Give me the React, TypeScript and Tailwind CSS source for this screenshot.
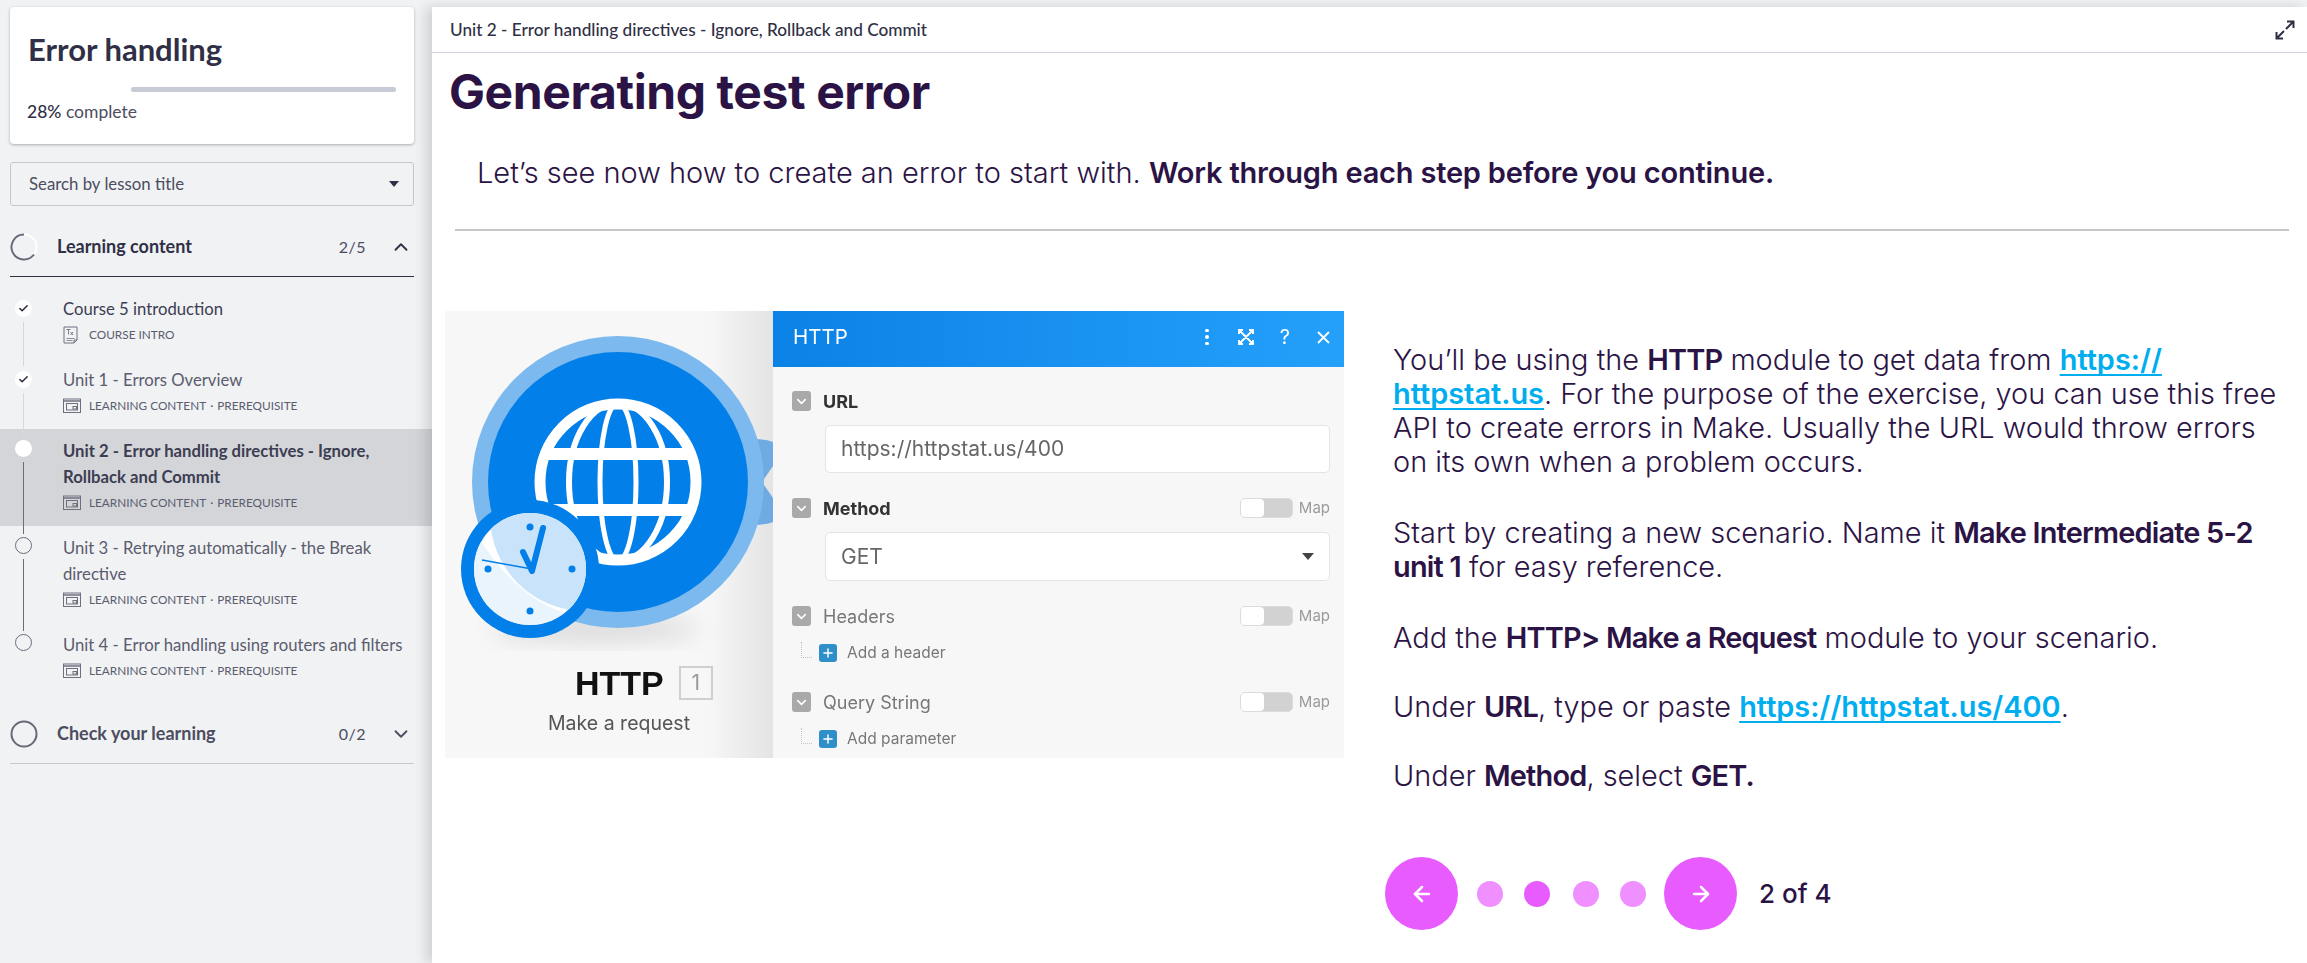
import React from "react";
import { ArrowLeft, ArrowRight, ChevronDown, ChevronUp, Plus, Check } from "lucide-react";

const lessons = [
  { title: ["Course 5 introduction"], sub: "COURSE INTRO", state: "done", intro: true, lineTop: "", lineBottom: "bg-[#d6d8dc]" },
  { title: ["Unit 1 - Errors Overview"], state: "done", lineTop: "bg-[#d6d8dc]", lineBottom: "bg-[#d6d8dc]" },
  { title: ["Unit 2 - Error handling directives - Ignore,", "Rollback and Commit"], state: "current", lineTop: "bg-[#d6d8dc]", lineBottom: "bg-[#6b6c7c]" },
  { title: ["Unit 3 - Retrying automatically - the Break", "directive"], state: "todo", lineTop: "bg-[#6b6c7c]", lineBottom: "bg-[#6b6c7c]" },
  { title: ["Unit 4 - Error handling using routers and filters"], state: "todo", lineTop: "bg-[#6b6c7c]", lineBottom: "" },
];

function SlideIcon() {
  return (
    <svg width="18" height="16" viewBox="0 0 18 16" fill="none" stroke="#6e7080" strokeWidth="1">
      <rect x="0.5" y="1" width="17" height="13.5" />
      <path d="M1 3h16" strokeWidth="1.5" />
      <rect x="3.5" y="5.5" width="11" height="6.5" />
      <rect x="10" y="8.5" width="3.5" height="2.5" />
    </svg>
  );
}

function DocIcon() {
  return (
    <svg width="16" height="18" viewBox="0 0 16 18" fill="none" stroke="#6e7080" strokeWidth="1">
      <path d="M1 1h13v13l-3 3H1z" />
      <path d="M11 17v-3h3" />
      <path d="M3.5 12.500h8M3.500 14.500h6" strokeWidth="0.8" />
      <path d="M3.500 3.500h4M5.500 3.500v5M7.500 6l2.500 3M10 6l-2.500 3" strokeWidth="0.9" />
    </svg>
  );
}

function LessonRow({ lesson, index }: { lesson: any; index: number }) {
  const current = lesson.state === "current";
  const firstTwo = index < 2;
  return (
    <div className={`flex items-stretch pl-[14px] ${current ? "bg-[#d4d5d9]" : ""}`}>
      <div className="flex w-[18px] flex-col items-center">
        <div className={`h-[8px] w-[1px] ${lesson.lineTop}`} />
        <div className={`${firstTwo ? "mt-[5px]" : "mt-[3px]"} flex h-[17px] w-[17px] shrink-0 items-center justify-center rounded-full ${lesson.state === "todo" ? "border border-[#6b6c7c]" : "bg-white"}`}>
          {lesson.state === "done" && <Check size={11} strokeWidth={3} color="#22223a" />}
        </div>
        <div className={`mt-[5px] w-[1px] flex-1 ${lesson.lineBottom}`} />
      </div>
      <div className="ml-[31px] pt-[9px] pb-[10px]">
        <div className={`text-[16.700px] leading-[26px] ${current ? "font-bold text-[#3c3d52]" : index === 0 ? "text-[#3c3d52]" : "text-[#5b5c6e]"}`}>
          {lesson.title.map((t: string) => (
            <div key={t} className="whitespace-nowrap">{t}</div>
          ))}
        </div>
        <div className="flex h-[26px] items-center text-[11.800px] text-[#5b5c6e]">
          {lesson.intro ? <DocIcon /> : <SlideIcon />}
          {lesson.intro ? (
            <span className="ml-[10px] whitespace-nowrap">COURSE INTRO</span>
          ) : (
            <span className="ml-[8px] whitespace-nowrap">
              LEARNING CONTENT<span className="mx-[4px]">·</span>PREREQUISITE
            </span>
          )}
        </div>
      </div>
    </div>
  );
}

function Sidebar() {
  return (
    <aside className="w-[432px] shrink-0 bg-[#f1f2f4] pt-[7px] font-['Lato',sans-serif] text-[#2f3045]">
      <div className="mx-[10px] h-[137px] w-[404px] rounded-[4px] bg-white px-[18px] pt-[24px] shadow-[0_1px_3px_rgba(0,0,0,0.3)]">
        <h2 className="text-[31px] leading-[36px] font-bold">Error handling</h2>
        <div className="mt-[20px] ml-[103px] h-[5px] rounded-[2px] bg-[#c8cad6]" />
        <div className="mt-[7px] -ml-[1px] text-[17.500px] leading-[26px]">
          <span className="font-medium">28%</span> <span className="text-[#4c4d60]">complete</span>
        </div>
      </div>
      <div className="mx-[10px] mt-[18px] flex h-[44px] w-[404px] items-center justify-between rounded-[3px] border border-[#c5c7d0] pr-[14px] pl-[18px] text-[16.800px]">
        <span className="text-[#4c4d60]">Search by lesson title</span>
        <span className="h-0 w-0 border-x-[5px] border-t-[6px] border-x-transparent border-t-[#2f3045]" />
      </div>

      <div className="mx-[10px] mt-[21px] flex h-[50px] w-[404px] items-center border-b border-[#2f3045] pb-[10px]">
        <svg width="28" height="28" viewBox="0 0 28 28" fill="none">
          <circle cx="14" cy="14" r="12.500" stroke="#ffffff" strokeWidth="2" />
          <path d="M14 1.500A12.500 12.500 0 1 0 24 21.500" stroke="#666878" strokeWidth="2" />
        </svg>
        <span className="ml-[19px] flex-1 text-[18px] font-bold">Learning content</span>
        <span className="text-[16px] tracking-[0.5px] text-[#4c4d60]">2/5</span>
        <ChevronUp size={22} strokeWidth={2} className="mr-[2px] ml-[24px]" />
      </div>

      <div className="mt-[10px] w-full">
        {lessons.map((lesson, i) => (
          <LessonRow key={i} lesson={lesson} index={i} />
        ))}
      </div>

      <div className="mx-[10px] mt-[20px] flex h-[50px] w-[404px] items-center border-b border-[#c5c7d0] pb-[10px]">
        <svg width="28" height="28" viewBox="0 0 28 28" fill="none">
          <circle cx="14" cy="14" r="12.500" stroke="#666878" strokeWidth="2" />
        </svg>
        <span className="ml-[19px] flex-1 text-[18px] font-bold text-[#4c4d60]">Check your learning</span>
        <span className="text-[16px] tracking-[0.5px] text-[#4c4d60]">0/2</span>
        <ChevronDown size={22} strokeWidth={2} className="mr-[2px] ml-[24px] text-[#4c4d60]" />
      </div>
    </aside>
  );
}

function HttpBubble() {
  return (
    <svg width="328" height="340" viewBox="0 0 328 340" fill="none" className="shrink-0">
      <defs>
        <clipPath id="face"><circle cx="85" cy="258" r="56" /></clipPath>
        <filter id="soft" x="-30%" y="-100%" width="160%" height="300%"><feGaussianBlur stdDeviation="12" /></filter>
      </defs>
      <ellipse cx="150" cy="318" rx="105" ry="12" fill="#000" opacity="0.12" filter="url(#soft)" />
      <path d="M305 129q14-2 23 2v24l-11 16 11 16v24q-9 4-23 2z" fill="#6fabe2" />
      <circle cx="173" cy="171" r="146" fill="#7cb9ee" />
      <circle cx="173" cy="171" r="130" fill="#027fe8" />
      <g stroke="#fff" fill="none">
        <circle cx="173" cy="171" r="78" strokeWidth="11" />
        <ellipse cx="173" cy="171" rx="49" ry="79" strokeWidth="6" />
        <ellipse cx="173" cy="171" rx="18" ry="79" strokeWidth="5" />
        <path d="M98 143h150M98 199h150" strokeWidth="12" />
      </g>
      <circle cx="85" cy="258" r="69" fill="#027fe8" />
      <circle cx="85" cy="258" r="56" fill="#fff" />
      <g clipPath="url(#face)">
        <circle cx="140" cy="205" r="95" fill="#c9e3fb" />
        <path d="M30 220 Q70 290 130 305 L60 330 L20 260Z" fill="#e3f1fd" opacity="0.8" />
      </g>
      <circle cx="85" cy="216" r="3.500" fill="#027fe8" />
      <circle cx="43" cy="258" r="3.500" fill="#027fe8" />
      <circle cx="127" cy="258" r="3.500" fill="#027fe8" />
      <circle cx="85" cy="300" r="3.500" fill="#027fe8" />
      <path d="M37 249l50 9" stroke="#027fe8" strokeWidth="1.500" />
      <path d="M78 241l9 19 11-43" stroke="#027fe8" strokeWidth="6" strokeLinecap="round" strokeLinejoin="round" />
    </svg>
  );
}

function Toggle() {
  return (
    <div className="ml-auto flex items-center text-[15px] text-[#9a9a9a]">
      <div className="flex h-[20px] w-[53px] rounded-[5px] border border-[#dcdcdc] bg-[#d2d2d2]">
        <div className="h-full w-[23px] rounded-[4px] bg-white" />
      </div>
      <span className="ml-[6px]">Map</span>
    </div>
  );
}

function FieldHead({ label, bold, map }: { label: string; bold?: boolean; map?: boolean }) {
  return (
    <div className="flex h-[20px] items-center">
      <div className="flex h-[20px] w-[19px] shrink-0 items-center justify-center rounded-[3px] bg-[#a9a9a9]">
        <ChevronDown size={15} strokeWidth={2.500} color="#fff" />
      </div>
      <span className={`ml-[12px] text-[18px] ${bold ? "font-bold text-[#333]" : "text-[#777]"}`}>{label}</span>
      {map && <Toggle />}
    </div>
  );
}

function AddRow({ label }: { label: string }) {
  return (
    <div className="mt-[17px] flex h-[20px] items-center pl-[9px]">
      <div className="mb-[6px] h-[16px] w-[11px] border-b border-l border-dotted border-[#c4c4c4]" />
      <div className="ml-[7px] flex h-[18px] w-[18px] items-center justify-center rounded-[3px] bg-[#2f8fc9]">
        <Plus size={14} strokeWidth={2.500} color="#fff" />
      </div>
      <span className="ml-[10px] text-[15.500px] text-[#777]">{label}</span>
    </div>
  );
}

function Illustration() {
  return (
    <div className="flex h-[447px] w-[899px] shrink-0 bg-[#f7f7f7] font-['Inter',sans-serif] blur-[0.3px]">
      <div className="w-[328px] shrink-0 bg-gradient-to-r from-[#f7f7f7] from-[80%] to-[#e4e4e4]">
        <HttpBubble />
        <div className="mt-[14px] flex h-[36px] items-center pl-[130px]">
          <span className="font-['Liberation_Sans',sans-serif] text-[34px] leading-none font-bold text-[#111]">HTTP</span>
          <span className="ml-[15px] flex h-[34px] w-[34px] items-center justify-center border-2 border-[#cfcfcf] text-[21px] text-[#999]">1</span>
        </div>
        <div className="mt-[9px] pl-[103px] text-[19.500px] leading-[26px] text-[#555]">Make a request</div>
      </div>
      <div className="min-w-0 flex-1">
        <div className="flex h-[56px] items-center bg-gradient-to-r from-[#0a82e6] to-[#24a0fb] pr-[14px] pb-[4px] pl-[20px] text-white">
          <span className="text-[20.500px]">HTTP</span>
          <span className="ml-auto flex flex-col gap-[3px]">
            <i className="h-[3.500px] w-[3.500px] rounded-full bg-white" />
            <i className="h-[3.500px] w-[3.500px] rounded-full bg-white" />
            <i className="h-[3.500px] w-[3.500px] rounded-full bg-white" />
          </span>
          <svg className="ml-[29px]" width="16" height="16" viewBox="0 0 16 16" fill="none" stroke="#fff" strokeWidth="1.800">
            <path d="M1 5V1h4M11 1h4v4M15 11v4h-4M5 15H1v-4M2 2l12 12M14 2L2 14" />
          </svg>
          <span className="ml-[26px] text-[20px] leading-none">?</span>
          <svg className="ml-[27px]" width="13" height="13" viewBox="0 0 13 13" fill="none" stroke="#fff" strokeWidth="1.800">
            <path d="M1 1l11 11M12 1L1 12" />
          </svg>
        </div>
        <div className="pt-[23px] pr-[14px] pl-[19px]">
          <div className="mt-[1px]"><FieldHead label="URL" bold /></div>
          <div className="mt-[14px] ml-[33px] flex h-[48px] items-center rounded-[5px] border border-[#e4e4e4] bg-white px-[15px] text-[21px] text-[#666]">
            https://httpstat.us/400
          </div>
          <div className="mt-[25px]"><FieldHead label="Method" bold map /></div>
          <div className="mt-[14px] ml-[33px] flex h-[49px] items-center justify-between rounded-[5px] border border-[#e4e4e4] bg-white px-[15px] text-[21px] text-[#666]">
            GET
            <span className="h-0 w-0 border-x-[6px] border-t-[7px] border-x-transparent border-t-[#444]" />
          </div>
          <div className="mt-[25px]"><FieldHead label="Headers" map /></div>
          <AddRow label="Add a header" />
          <div className="mt-[29px]"><FieldHead label="Query String" map /></div>
          <AddRow label="Add parameter" />
        </div>
      </div>
    </div>
  );
}

function Pager() {
  return (
    <div className="mt-[64px] flex items-center">
      <button className="flex h-[73px] w-[73px] items-center justify-center rounded-full bg-[#e85bff] text-white">
        <ArrowLeft size={24} strokeWidth={2.500} />
      </button>
      <div className="ml-[19px] h-[26px] w-[26px] rounded-full bg-[#f08fff]" />
      <div className="ml-[21px] h-[26px] w-[26px] rounded-full bg-[#e85bff]" />
      <div className="ml-[23px] h-[26px] w-[26px] rounded-full bg-[#f08fff]" />
      <div className="ml-[21px] h-[26px] w-[26px] rounded-full bg-[#f08fff]" />
      <button className="ml-[18px] flex h-[73px] w-[73px] items-center justify-center rounded-full bg-[#e85bff] text-white">
        <ArrowRight size={24} strokeWidth={2.500} />
      </button>
      <span className="ml-[22px] text-[26px] font-medium">2 of 4</span>
    </div>
  );
}

function Link({ children }: { children: React.ReactNode }) {
  return <a className="font-semibold text-[#00aeef] underline decoration-2 underline-offset-[4px] [text-decoration-skip-ink:none]">{children}</a>;
}

function Strong({ children }: { children: React.ReactNode }) {
  return <b className="font-semibold tracking-[-0.8px]">{children}</b>;
}

function Main() {
  return (
    <main className="mt-[7px] min-w-0 flex-1 bg-white font-['Inter',sans-serif] text-[#2b1445] shadow-[-6px_0_12px_rgba(0,0,0,0.14)]">
      <header className="flex h-[46px] items-center justify-between border-b border-[#d0d2dc] pr-[12px] pl-[18px] font-['Lato',sans-serif] text-[17.200px] font-medium text-[#2f3045]">
        <span>Unit 2 - Error handling directives - Ignore, Rollback and Commit</span>
        <svg width="20" height="20" viewBox="0 0 20 20" fill="none" stroke="#2f3045" strokeWidth="2">
          <path d="M11 9l7-7M12 1.500h6.500V8" />
          <path d="M9 11l-7 7M8 18.500H1.500V12" />
        </svg>
      </header>
      <div className="pl-[13px]">
        <h1 className="mt-[7px] pl-[4px] text-[48px] leading-[64px] font-bold tracking-[-0.4px]">Generating test error</h1>
        <p className="mt-[29px] pl-[32px] text-[29px] leading-[40px] font-light">
          Let’s see now how to create an error to start with. <span className="font-semibold tracking-[-0.2px]">Work through each step before you continue.</span>
        </p>
        <div className="mt-[36px] mr-[18px] ml-[10px] h-[2px] bg-[#cbc6c6]" />
        <div className="mt-[80px] flex">
          <Illustration />
          <div className="ml-[49px] min-w-0">
            <div className="pt-[32px] text-[28.900px] leading-[34px] font-light">
              <p>
                You’ll be using the <Strong>HTTP</Strong> module to get data from <Link>https://</Link>
                <br />
                <Link>httpstat.us</Link>. For the purpose of the exercise, you can use this free
                <br />
                API to create errors in Make. Usually the URL would throw errors
                <br />
                on its own when a problem occurs.
              </p>
              <p className="mt-[37px]">
                Start by creating a new scenario. Name it <Strong>Make Intermediate 5-2</Strong>
                <br />
                <Strong>unit 1</Strong> for easy reference.
              </p>
              <p className="mt-[37px]">
                Add the <Strong>HTTP&gt; Make a Request</Strong> module to your scenario.
              </p>
              <p className="mt-[35px]">
                Under <Strong>URL</Strong>, type or paste <Link>https://httpstat.us/400</Link>.
              </p>
              <p className="mt-[35px]">
                Under <Strong>Method</Strong>, select <Strong>GET.</Strong>
              </p>
            </div>
            <div className="-ml-[8px]"><Pager /></div>
          </div>
        </div>
      </div>
    </main>
  );
}

export default function App() {
  return (
    <div className="flex h-[963px] w-[2307px] overflow-hidden bg-[#f1f2f4]">
      <Sidebar />
      <Main />
    </div>
  );
}
